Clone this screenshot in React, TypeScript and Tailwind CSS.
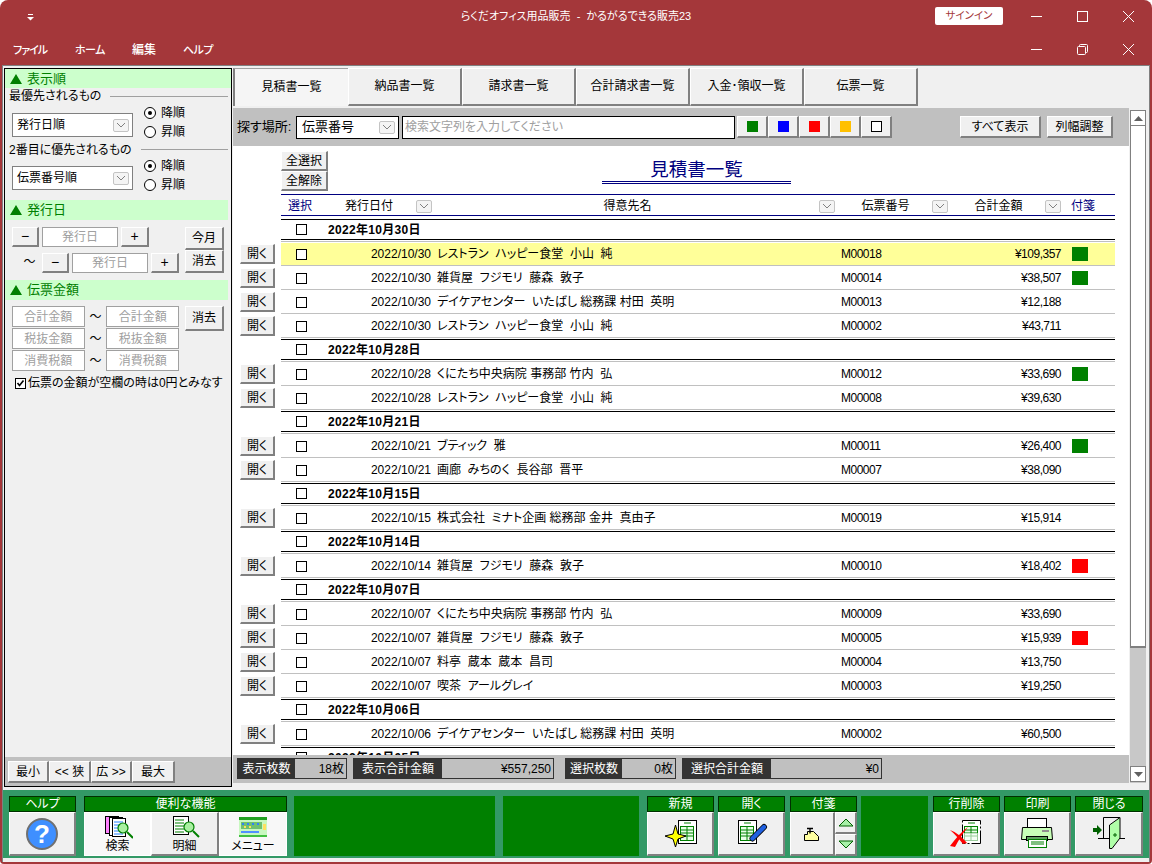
import type { ReactNode } from 'react';

const btn = 'bg-[#f0f0f0] border-t border-l border-t-white border-l-white border-r-2 border-b-2 border-r-[#808080] border-b-[#808080] flex items-center justify-center';
const pressedBtn = 'bg-[#f8f8f8] bg-[radial-gradient(#dcdcdc_0.5px,transparent_0.5px)] bg-[length:2px_2px] border border-white flex flex-col items-center justify-center';
const placeholderBox = 'bg-white border border-[#a0a0a0] text-[#a0a0a0] flex items-center justify-center';

type Row = { date: string; name: string; no: string; amount: string; tag?: string; hi?: boolean };
type Group = { title: string; rows: Row[] };

const groups: Group[] = [
  {
    title: '2022年10月30日',
    rows: [
      { date: '2022/10/30', name: 'レストラン  ハッピー食堂  小山  純', no: 'M00018', amount: '¥109,357', tag: 'bg-[#008000]', hi: true },
      { date: '2022/10/30', name: '雑貨屋  フジモリ  藤森  敦子', no: 'M00014', amount: '¥38,507', tag: 'bg-[#008000]' },
      { date: '2022/10/30', name: 'デイケアセンター  いたばし 総務課 村田  英明', no: 'M00013', amount: '¥12,188' },
      { date: '2022/10/30', name: 'レストラン  ハッピー食堂  小山  純', no: 'M00002', amount: '¥43,711' },
    ],
  },
  {
    title: '2022年10月28日',
    rows: [
      { date: '2022/10/28', name: 'くにたち中央病院 事務部 竹内  弘', no: 'M00012', amount: '¥33,690', tag: 'bg-[#008000]' },
      { date: '2022/10/28', name: 'レストラン  ハッピー食堂  小山  純', no: 'M00008', amount: '¥39,630' },
    ],
  },
  {
    title: '2022年10月21日',
    rows: [
      { date: '2022/10/21', name: 'ブティック  雅', no: 'M00011', amount: '¥26,400', tag: 'bg-[#008000]' },
      { date: '2022/10/21', name: '画廊  みちのく  長谷部  晋平', no: 'M00007', amount: '¥38,090' },
    ],
  },
  {
    title: '2022年10月15日',
    rows: [{ date: '2022/10/15', name: '株式会社  ミナト企画 総務部 金井  真由子', no: 'M00019', amount: '¥15,914' }],
  },
  {
    title: '2022年10月14日',
    rows: [{ date: '2022/10/14', name: '雑貨屋  フジモリ  藤森  敦子', no: 'M00010', amount: '¥18,402', tag: 'bg-[#ff0000]' }],
  },
  {
    title: '2022年10月07日',
    rows: [
      { date: '2022/10/07', name: 'くにたち中央病院 事務部 竹内  弘', no: 'M00009', amount: '¥33,690' },
      { date: '2022/10/07', name: '雑貨屋  フジモリ  藤森  敦子', no: 'M00005', amount: '¥15,939', tag: 'bg-[#ff0000]' },
      { date: '2022/10/07', name: '料亭  蔵本  蔵本  昌司', no: 'M00004', amount: '¥13,750' },
      { date: '2022/10/07', name: '喫茶  アールグレイ', no: 'M00003', amount: '¥19,250' },
    ],
  },
  {
    title: '2022年10月06日',
    rows: [{ date: '2022/10/06', name: 'デイケアセンター  いたばし 総務課 村田  英明', no: 'M00002', amount: '¥60,500' }],
  },
  { title: '2022年10月05日', rows: [] },
];

const tabs = ['納品書一覧', '請求書一覧', '合計請求書一覧', '入金･領収一覧', '伝票一覧'];

const DropBtn = () => (
  <span className="w-[16px] h-[13px] bg-[#f4f4f4] border border-[#c4c4c4] rounded-[2px] flex items-center justify-center shrink-0">
    <svg width="10" height="6" viewBox="0 0 10 6" fill="none" stroke="#808080">
      <path d="M1 1l4 4 4-4" />
    </svg>
  </span>
);

const Check = () => <span className="block w-[11px] h-[11px] border border-black bg-white shrink-0" />;

const Radio = ({ on }: { on?: boolean }) => (
  <span className="w-[12px] h-[12px] rounded-full border border-black bg-white flex items-center justify-center shrink-0">
    {on && <span className="w-[4px] h-[4px] rounded-full bg-black" />}
  </span>
);

const SectionHead = ({ label, first }: { label: string; first?: boolean }) => (
  <div className={`bg-[#ccffcc] flex items-center pl-[5px] text-[#008000] text-[13px] ${first ? 'h-[19px]' : 'h-[20px] mr-[3px]'}`}>
    <svg width="12" height="10" viewBox="0 0 12 10" className="mr-[5px]">
      <path d="M6 0l6 10H0z" fill="#008000" />
    </svg>
    {label}
  </div>
);

const SortRows = () => (
  <div className="flex flex-col ml-[11px]">
    <div className="h-[19px] flex items-center gap-[5px]">
      <Radio on />
      <span>降順</span>
    </div>
    <div className="h-[19px] flex items-center gap-[5px]">
      <Radio />
      <span>昇順</span>
    </div>
  </div>
);

const SelectBox = ({ label }: { label: string }) => (
  <div className="w-[121px] h-[24px] mt-[9px] bg-white border border-[#808080] flex items-center justify-between pl-[4px] pr-[3px]">
    {label}
    <DropBtn />
  </div>
);

const LeftPanel = () => (
  <div className="w-[228px] h-[719px] mt-[2px] border border-black flex flex-col shrink-0">
    <SectionHead label="表示順" first />
    <div className="h-[16px] flex items-center pl-[4px] mr-[3px]">
      <span>最優先されるもの</span>
      <span className="flex-1 h-px bg-[#a0a0a0] ml-[9px]" />
    </div>
    <div className="flex h-[37px] pl-[7px]">
      <SelectBox label="発行日順" />
      <SortRows />
    </div>
    <div className="h-[15px] mt-px flex items-center pl-[4px] mr-[3px]">
      <span>2番目に優先されるもの</span>
      <span className="flex-1 h-px bg-[#a0a0a0] ml-[9px]" />
    </div>
    <div className="flex h-[37px] pl-[7px] mb-[6px]">
      <SelectBox label="伝票番号順" />
      <SortRows />
    </div>

    <SectionHead label="発行日" />
    <div className="h-[60px] flex pl-[7px] pt-[7px]">
      <div className="flex flex-col gap-[6px] w-[167px]">
        <div className="flex h-[20px] gap-[3px]">
          <button className={`${btn} w-[27px] text-[14px]`}>−</button>
          <div className={`${placeholderBox} w-[76px]`}>発行日</div>
          <button className={`${btn} w-[28px] text-[14px]`}>+</button>
        </div>
        <div className="flex h-[20px] gap-[3px]">
          <span className="w-[27px] text-center pl-[8px]">〜</span>
          <button className={`${btn} w-[27px] text-[14px]`}>−</button>
          <div className={`${placeholderBox} w-[76px]`}>発行日</div>
          <button className={`${btn} w-[28px] text-[14px]`}>+</button>
        </div>
      </div>
      <div className="flex flex-col ml-[6px]">
        <button className={`${btn} w-[39px] h-[23px]`}>今月</button>
        <button className={`${btn} w-[39px] h-[23px]`}>消去</button>
      </div>
    </div>

    <SectionHead label="伝票金額" />
    <div className="flex pl-[7px] pt-[6px]">
      <div className="flex flex-col gap-px w-[167px]">
        {['合計金額', '税抜金額', '消費税額'].map((t) => (
          <div key={t} className="flex h-[21px] items-center">
            <div className={`${placeholderBox} w-[73px] h-[21px]`}>{t}</div>
            <span className="w-[22px] text-center">〜</span>
            <div className={`${placeholderBox} w-[73px] h-[21px]`}>{t}</div>
          </div>
        ))}
      </div>
      <button className={`${btn} w-[39px] h-[25px] ml-[6px]`}>消去</button>
    </div>
    <label className="flex items-center pl-[10px] mt-[4px] h-[16px] gap-[2px] whitespace-nowrap">
      <svg width="11" height="11" viewBox="0 0 11 11" className="shrink-0">
        <rect x=".5" y=".5" width="10" height="10" fill="#fff" stroke="#000" />
        <path d="M2.5 5l2 2.5 4-5" fill="none" stroke="#000" strokeWidth="1.6" />
      </svg>
      伝票の金額が空欄の時は0円とみなす
    </label>

    <div className="flex-1" />
    <div className="h-[29px] bg-[#c0c0c0] flex items-start pl-[3px] pt-[4px]">
      <button className={`${btn} w-[41px] h-[22px]`}>最小</button>
      <button className={`${btn} w-[42px] h-[22px]`}>&lt;&lt; 狭</button>
      <button className={`${btn} w-[41px] h-[22px]`}>広 &gt;&gt;</button>
      <button className={`${btn} w-[43px] h-[22px]`}>最大</button>
    </div>
  </div>
);

const Tabs = () => (
  <div className="flex h-[38px] mt-[2px] ml-px">
    <div className="w-[115px] h-[38px] pb-[2px] border-t border-l-2 border-t-[#a0a0a0] border-l-[#808080] bg-[#f5f5f5] flex items-center justify-center bg-[radial-gradient(#e0e0e0_0.5px,transparent_0.5px)] bg-[length:2px_2px]">
      見積書一覧
    </div>
    {tabs.map((t) => (
      <button key={t} className={`${btn} w-[114px] h-[38px] pb-[2px]`}>
        {t}
      </button>
    ))}
  </div>
);

const SearchBar = () => (
  <div className="h-[38px] bg-[#c0c0c0] flex items-center pl-[4px] text-[13px]">
    <span className="w-[59px] whitespace-nowrap">探す場所:</span>
    <div className="w-[103px] h-[23px] bg-white border border-black flex items-center justify-between pl-[5px] pr-[3px]">
      伝票番号
      <DropBtn />
    </div>
    <div className="w-[333px] h-[23px] ml-[3px] bg-white border border-black flex items-center pl-[2px] text-[#a0a0a0] text-[12px]">
      検索文字列を入力してください
    </div>
    <div className="flex ml-[2px]">
      {['bg-[#008000]', 'bg-[#0000ff]', 'bg-[#ff0000]', 'bg-[#ffc000]', 'bg-white border border-black'].map((c) => (
        <button key={c} className={`${btn} w-[31px] h-[22px]`}>
          <span className={`block w-[11px] h-[11px] ${c}`} />
        </button>
      ))}
    </div>
    <button className={`${btn} w-[81px] h-[22px] ml-[68px] text-[12px]`}>すべて表示</button>
    <button className={`${btn} w-[66px] h-[22px] ml-[6px] text-[12px]`}>列幅調整</button>
  </div>
);

const GroupRow = ({ title }: { title: string }) => (
  <div className="h-[24px] ml-[48px] w-[834px] pt-px border-b border-[#c0c0c0]">
    <div className="h-[21px] border-y border-black flex items-center pl-[15px]">
      <Check />
      <span className="ml-[21px] font-bold tracking-[0.3px]">{title}</span>
    </div>
  </div>
);

const DataRow = ({ row }: { row: Row }) => (
  <div className="flex h-[24px]">
    <div className="w-[48px] pl-[7px] pt-[2px] shrink-0">
      <button className={`${btn} w-[35px] h-[20px]`}>開く</button>
    </div>
    <div className="w-[834px] pt-px border-b border-[#c0c0c0]">
      <div className={`h-[22px] flex items-center pl-[15px] ${row.hi ? 'bg-[#ffff99]' : ''}`}>
        <Check />
        <span className="w-[124px] text-right">{row.date}</span>
        <span className="w-[404px] ml-[6px] whitespace-pre">{row.name}</span>
        <span className="w-[120px] tracking-[-0.5px]">{row.no}</span>
        <span className="w-[100px] text-right tracking-[-0.5px]">{row.amount}</span>
        {row.tag && <span className={`w-[16px] h-[14px] ml-[11px] ${row.tag}`} />}
      </div>
    </div>
  </div>
);

const ListArea = () => (
  <div className="h-[609px] bg-white overflow-hidden">
    <div className="h-[48px] flex pl-[48px] pt-[5px]">
      <div className="w-[47px] flex flex-col">
        <button className={`${btn} h-[20px]`}>全選択</button>
        <button className={`${btn} h-[20px]`}>全解除</button>
      </div>
      <div className="w-[189px] h-[33px] ml-[274px] pt-[8px] border-b-[3px] border-double border-[#000080] text-[#000080] text-[18.5px] text-center leading-[22px]">
        見積書一覧
      </div>
    </div>
    <div className="ml-[48px] w-[834px] h-[22px] pt-[2px] border-y border-[#000080] flex items-center">
      <span className="w-[64px] pl-[7px] text-[#000080]">選択</span>
      <span className="w-[71px]">発行日付</span>
      <DropBtn />
      <span className="w-[387px] pl-[4px] text-center">得意先名</span>
      <DropBtn />
      <span className="w-[97px] pl-[4px] text-center">伝票番号</span>
      <DropBtn />
      <span className="w-[97px] pl-[4px] text-center">合計金額</span>
      <DropBtn />
      <span className="pl-[10px] text-[#000080]">付箋</span>
    </div>
    <div className="h-[2px]" />
    {groups.map((g) => (
      <div key={g.title}>
        <GroupRow title={g.title} />
        {g.rows.map((r) => (
          <DataRow key={r.no + r.date} row={r} />
        ))}
      </div>
    ))}
  </div>
);

const Stat = ({ label, labelW, valueW, value }: { label: string; labelW: string; valueW: string; value: string }) => (
  <div className="flex h-[21px] border border-[#333]">
    <span className={`${labelW} bg-[#333] text-white flex items-center justify-center`}>{label}</span>
    <span className={`${valueW} bg-[#c0c0c0] flex items-center justify-end pr-[2px]`}>{value}</span>
  </div>
);

const StatusBar = () => (
  <div className="h-[28px] bg-[#c0c0c0] flex items-start pt-[3px] pl-[4px]">
    <Stat label="表示枚数" labelW="w-[57px]" valueW="w-[51px]" value="18枚" />
    <div className="ml-[6px]">
      <Stat label="表示合計金額" labelW="w-[88px]" valueW="w-[111px]" value="¥557,250" />
    </div>
    <div className="ml-[11px]">
      <Stat label="選択枚数" labelW="w-[56px]" valueW="w-[53px]" value="0枚" />
    </div>
    <div className="ml-[6px]">
      <Stat label="選択合計金額" labelW="w-[88px]" valueW="w-[110px]" value="¥0" />
    </div>
  </div>
);

const Arrow = ({ d }: { d: string }) => (
  <svg width="9" height="5" viewBox="0 0 9 5">
    <path d={d} fill="#606060" />
  </svg>
);

const ScrollBar = () => (
  <div className="w-[16px] h-[673px] mt-[2px] ml-px bg-[#c8c8c8] flex flex-col">
    <div className="h-[16px] bg-white border border-[#808080] flex items-center justify-center shrink-0">
      <Arrow d="M4.5 0L9 5H0z" />
    </div>
    <div className="h-[522px] bg-white border-x border-b-2 border-[#808080] shrink-0" />
    <div className="flex-1" />
    <div className="h-[16px] bg-white border border-[#808080] flex items-center justify-center shrink-0">
      <Arrow d="M0 0h9L4.5 5z" />
    </div>
    <div className="h-px" />
  </div>
);

const HelpIcon = () => (
  <svg width="32" height="32" viewBox="0 0 32 32">
    <circle cx="16" cy="16" r="15" fill="#3f8fff" stroke="#707070" strokeWidth="2" />
    <text x="16" y="25" textAnchor="middle" fontSize="26" fontWeight="bold" fill="#fff" fontFamily="Liberation Sans">?</text>
  </svg>
);

const Lens = ({ x, y }: { x: number; y: number }) => (
  <g>
    <path d={`M${x + 4} ${y + 4}l6 6`} stroke="#008000" strokeWidth="2" />
    <circle cx={x} cy={y} r="5" fill="#a8f0a0" stroke="#008000" strokeWidth="1.2" />
  </g>
);

const SheetLines = ({ x, y, n, c }: { x: number; y: number; n: number; c: string }) => (
  <g stroke={c}>
    {Array.from({ length: n }).map((_, i) => (
      <path key={i} d={`M${x} ${y + i * 3}h9`} />
    ))}
  </g>
);

const SearchIcon = () => (
  <svg width="30" height="24" viewBox="0 0 30 24">
    <rect x="2.5" y="0.5" width="13" height="17" fill="#ff80ff" stroke="#000" />
    <rect x="6.5" y="1.5" width="13" height="18" fill="#fff" stroke="#000" />
    <rect x="9.5" y="2.5" width="13" height="18" fill="#fff" stroke="#000" />
    <SheetLines x={11} y={6} n={5} c="#2080ff" />
    <Lens x={20} y={12} />
  </svg>
);

const DetailIcon = () => (
  <svg width="30" height="24" viewBox="0 0 30 24">
    <rect x="3.5" y="0.5" width="15" height="18" fill="#fff" stroke="#000" />
    <SheetLines x={5} y={4} n={5} c="#008000" />
    <Lens x={19} y={11} />
  </svg>
);

const MenuIcon = () => (
  <svg width="30" height="24" viewBox="0 0 30 24">
    <rect x="1" y="1" width="28" height="18" fill="#c8f8c0" />
    <rect x="1" y="1" width="28" height="3" fill="#20a020" />
    <rect x="3" y="6" width="21" height="7" fill="#70c070" />
    <g fill="#3080ff">
      <rect x="4" y="7" width="2" height="2" />
      <rect x="9" y="7" width="2" height="2" />
      <rect x="14" y="7" width="2" height="2" />
      <rect x="19" y="7" width="2" height="2" />
    </g>
    <g fill="#ffe060">
      <rect x="6" y="10" width="2" height="2" />
      <rect x="11" y="10" width="2" height="2" />
    </g>
    <rect x="25" y="8" width="3" height="6" fill="#ffe060" />
    <rect x="3" y="15" width="18" height="2" fill="#5090ff" />
    <rect x="1" y="19" width="28" height="2" fill="#40c040" />
  </svg>
);

const TableDoc = ({ x, y, faded }: { x: number; y: number; faded?: boolean }) => {
  const c = '#008000';
  return (
    <g>
      <rect x={x + 0.5} y={y + 0.5} width="18" height="23" fill="#fff" stroke="#000" strokeDasharray={faded ? '22 2 2 2' : undefined} />
      <path d={`M${x + 6} ${y + 3}h7`} stroke={c} />
      <rect x={x + 2.5} y={y + 6.5} width="13" height="14" fill="#e8ffe8" stroke={c} />
      <path d={`M${x + 3} ${y + 10}h12M${x + 3} ${y + 13}h12M${x + 3} ${y + 16}h12M${x + 9} ${y + 7}v13`} stroke={c} />
      {faded && <rect x={x + 2} y={y + 13} width="15" height="9" fill="#fff" opacity=".6" />}
    </g>
  );
};

const NewIcon = () => (
  <svg width="40" height="30" viewBox="0 0 40 30">
    <TableDoc x={18} y={1} />
    <path d="M15.5 6L18 15l8 2-8 3-2.5 8-2.5-8-8-3 8-2z" fill="#ffff00" stroke="#000" />
  </svg>
);

const OpenIcon = () => (
  <svg width="40" height="30" viewBox="0 0 40 30">
    <TableDoc x={7} y={1} />
    <path d="M21.5 19.5L33 8" stroke="#000" strokeWidth="6" strokeLinecap="round" />
    <path d="M21.5 19.5L33 8" stroke="#2060e0" strokeWidth="4.4" strokeLinecap="round" />
  </svg>
);

const NoteIcon = () => (
  <svg width="18" height="14" viewBox="0 0 18 14">
    <path d="M1.5 13.5v-6h3v-3h6l5 5v4z" fill="#ffffa0" stroke="#000" />
    <path d="M4 1.5h6M7 1.5v5" stroke="#000" strokeWidth="1.4" />
  </svg>
);

const DeleteIcon = () => (
  <svg width="40" height="30" viewBox="0 0 40 30">
    <TableDoc x={16} y={1} faded />
    <path d="M22 8C16 12 10 19 4 27l5 1c3-6 8-14 13-20z" fill="#ff0000" />
    <path d="M4 11c6 2 12 7 17 13l-4 1C13 20 9 15 4 11z" fill="#ff0000" />
  </svg>
);

const PrintIcon = () => (
  <svg width="40" height="31" viewBox="0 0 40 31">
    <rect x="10.5" y="0.5" width="19" height="10" fill="#fff" stroke="#000" />
    <path d="M5.5 9.5h29l1 12h-31z" fill="#c8ffb8" stroke="#000" />
    <rect x="25" y="12" width="7" height="2" fill="#909090" />
    <rect x="9.5" y="18.5" width="21" height="4" fill="#60a060" stroke="#000" />
    <rect x="11.5" y="21.5" width="18" height="8" fill="#fff" stroke="#008000" />
    <path d="M14 24h13M14 26h13" stroke="#008000" />
  </svg>
);

const DoorIcon = () => (
  <svg width="40" height="34" viewBox="0 0 40 34">
    <path d="M4 11h4V8l5 5-5 5v-3H4z" fill="#006000" />
    <path d="M9 21.5h27" stroke="#000" />
    <path d="M14.5 21V.5H31" fill="none" stroke="#000" />
    <path d="M20.5 31.5V8L31 .5V21l-8 10.5z" fill="#b0ffa8" stroke="#000" />
    <path d="M24 18h4M26 16v4" stroke="#006000" />
  </svg>
);

const GroupHead = ({ children }: { children: ReactNode }) => (
  <div className="h-[16px] bg-[#008000] border border-[#003000] text-white flex items-center justify-center">{children}</div>
);

const ActionBtn = ({ label, icon, className }: { label: string; icon: ReactNode; className: string }) => (
  <div className={`${className} shrink-0`}>
    <GroupHead>{label}</GroupHead>
    <button className={`${btn} w-full h-[44px]`}>{icon}</button>
  </div>
);

const ArrowBtn = ({ d }: { d: string }) => (
  <button className={`${btn} h-[22px] w-[22px]`}>
    <svg width="16" height="9" viewBox="0 0 16 9">
      <path d={d} fill="#a8f0a8" stroke="#006000" />
    </svg>
  </button>
);

const ToolBar = () => (
  <div className="h-[68px] bg-[#339966] flex pl-[6px] pt-[6px]">
    <ActionBtn className="w-[67px]" label="ヘルプ" icon={<HelpIcon />} />
    <div className="w-[203px] ml-[8px] shrink-0">
      <GroupHead>便利な機能</GroupHead>
      <div className="flex h-[44px]">
        <button className={`${pressedBtn} w-[67px] leading-none`}>
          <SearchIcon />
          <span>検索</span>
        </button>
        <button className={`${btn} w-[68px] flex-col leading-none`}>
          <DetailIcon />
          <span>明細</span>
        </button>
        <button className={`${pressedBtn} w-[68px] leading-none`}>
          <MenuIcon />
          <span>メニュー</span>
        </button>
      </div>
    </div>
    <div className="w-[201px] h-[60px] ml-[7px] bg-[#008000]" />
    <div className="w-[136px] h-[60px] ml-[8px] bg-[#008000]" />
    <ActionBtn className="w-[67px] ml-[8px]" label="新規" icon={<NewIcon />} />
    <ActionBtn className="w-[67px] ml-[4px]" label="開く" icon={<OpenIcon />} />
    <div className="w-[67px] ml-[5px] shrink-0">
      <GroupHead>付箋</GroupHead>
      <div className="flex h-[44px]">
        <button className={`${btn} w-[45px]`}>
          <NoteIcon />
        </button>
        <div className="flex flex-col">
          <ArrowBtn d="M8 1l7 7H1z" />
          <ArrowBtn d="M1 1h14l-7 7z" />
        </div>
      </div>
    </div>
    <div className="w-[67px] h-[60px] ml-[4px] bg-[#008000]" />
    <ActionBtn className="w-[67px] ml-[5px]" label="行削除" icon={<DeleteIcon />} />
    <ActionBtn className="w-[67px] ml-[4px]" label="印刷" icon={<PrintIcon />} />
    <ActionBtn className="w-[68px] ml-[4px]" label="閉じる" icon={<DoorIcon />} />
  </div>
);

const CtlMin = () => (
  <svg width="11" height="11" viewBox="0 0 11 11" stroke="#fff" fill="none">
    <path d="M0 5.5h11" />
  </svg>
);
const CtlMax = () => (
  <svg width="11" height="11" viewBox="0 0 11 11" stroke="#fff" fill="none">
    <rect x=".5" y=".5" width="10" height="10" />
  </svg>
);
const CtlRestore = () => (
  <svg width="11" height="11" viewBox="0 0 11 11" stroke="#fff" fill="none">
    <rect x=".5" y="2.5" width="8" height="8" rx="1" />
    <path d="M2.5 2.5v-1a1 1 0 0 1 1-1h6a1 1 0 0 1 1 1v6a1 1 0 0 1-1 1h-1" />
  </svg>
);
const CtlClose = () => (
  <svg width="11" height="11" viewBox="0 0 11 11" stroke="#fff" fill="none">
    <path d="M0 0l11 11M11 0L0 11" />
  </svg>
);

const Ctl = ({ children }: { children: ReactNode }) => <div className="w-[46px] flex items-center justify-center">{children}</div>;

export default function App() {
  return (
    <div className="w-[1152px] h-[864px] bg-white">
      <div className="w-full h-full bg-[#a4373a] rounded-t-[8px] rounded-b-[4px] flex flex-col overflow-hidden text-[12px] text-black pb-[2px] font-['Liberation_Sans','Noto_Sans_CJK_JP',sans-serif] [font-feature-settings:'palt']">
        <div className="h-[33px] flex text-white shrink-0">
          <div className="w-[400px] pl-[27px] pt-[14px]">
            <svg width="7" height="7" viewBox="0 0 7 7">
              <path d="M1 .5h5" stroke="#fff" />
              <path d="M0 3h7L3.5 6.5z" fill="#fff" />
            </svg>
          </div>
          <div className="w-[352px] flex items-center justify-center whitespace-pre text-[11px]">らくだオフィス用品販売  -  かるがるできる販売23</div>
          <div className="w-[400px] flex justify-end pr-px">
            <div className="w-[68px] h-[18px] mt-[7px] mr-[10px] bg-white rounded-[2px] text-[#a4373a] text-[10.5px] flex items-center justify-center">サインイン</div>
            <Ctl><CtlMin /></Ctl>
            <Ctl><CtlMax /></Ctl>
            <Ctl><CtlClose /></Ctl>
          </div>
        </div>
        <div className="h-[32px] flex text-white font-medium shrink-0">
          <div className="flex-1 flex items-center pl-[13px] pt-[2px]">
            <span className="w-[62px] text-[11px] tracking-[-1px]">ファイル</span>
            <span className="w-[57px] text-[11px] tracking-[-0.5px]">ホーム</span>
            <span className="w-[51px]">編集</span>
            <span className="text-[11px] tracking-[-0.5px]">ヘルプ</span>
          </div>
          <div className="flex pr-px">
            <Ctl><CtlMin /></Ctl>
            <Ctl><CtlRestore /></Ctl>
            <Ctl><CtlClose /></Ctl>
          </div>
        </div>
        <div className="flex-1 mx-[2px] bg-[#f0f0f0] border-x border-t border-[#808080] flex flex-col">
          <div className="h-[724px] flex pl-px">
            <LeftPanel />
            <div className="flex-1">
              <Tabs />
              <div className="flex mt-[2px]">
                <div className="w-[896px] ml-px">
                  <SearchBar />
                  <ListArea />
                  <StatusBar />
                </div>
                <ScrollBar />
              </div>
            </div>
          </div>
          <ToolBar />
        </div>
      </div>
    </div>
  );
}
